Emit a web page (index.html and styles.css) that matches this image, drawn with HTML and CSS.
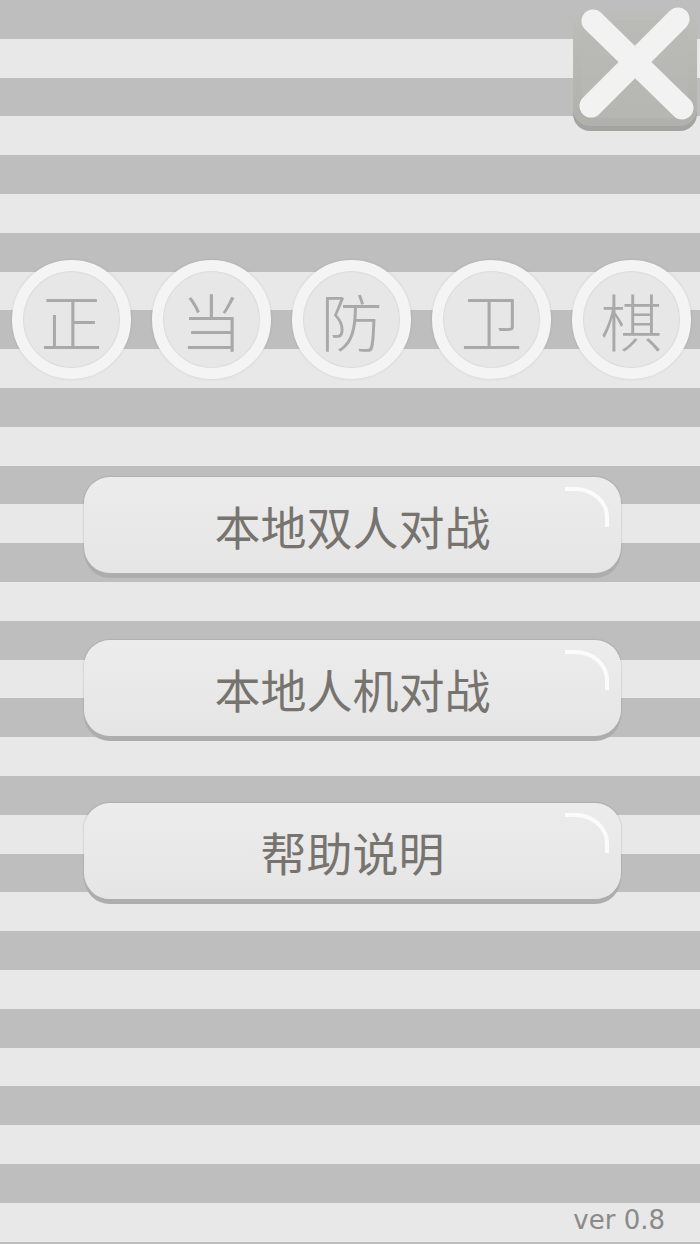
FILE: index.html
```html
<!DOCTYPE html>
<html lang="zh">
<head>
<meta charset="utf-8">
<title>正当防卫棋</title>
<link rel="stylesheet" href="styles.css">
</head>
<body>
<div class="page">
  <header class="topbar">
    <button class="close" aria-label="关闭">
      <svg width="140" height="135" viewBox="0 0 140 135">
        <defs>
          <linearGradient id="boxg" x1="0" y1="0" x2="0" y2="1">
            <stop offset="0" stop-color="#bdbdb9"/>
            <stop offset="1" stop-color="#b0b0ac"/>
          </linearGradient>
        </defs>
        <rect x="13" y="17" width="124" height="114" rx="17" fill="#a3a3a1"/>
        <rect x="13" y="12" width="124" height="114" rx="17" fill="url(#boxg)"/>
        <rect x="22" y="20" width="106" height="98" rx="12" fill="#b9b9b5" opacity="0.6"/>
        <g stroke="#f2f2f2" stroke-width="23" stroke-linecap="round">
          <line x1="33" y1="21" x2="122" y2="108"/>
          <line x1="118" y1="19" x2="31" y2="106"/>
        </g>
      </svg>
    </button>
  </header>

  <h1 class="title">
    <span class="piece">正</span>
    <span class="piece">当</span>
    <span class="piece">防</span>
    <span class="piece">卫</span>
    <span class="piece">棋</span>
  </h1>

  <nav class="menu">
    <button class="menu-btn">本地双人对战</button>
    <button class="menu-btn">本地人机对战</button>
    <button class="menu-btn">帮助说明</button>
  </nav>

  <footer class="version">ver 0.8</footer>
</div>
</body>
</html>
```

FILE: styles.css
```css
* { box-sizing: border-box; }

html, body {
  margin: 0;
  padding: 0;
}

body {
  width: 700px;
  height: 1244px;
  overflow: hidden;
  background: repeating-linear-gradient(
    to bottom,
    #bebebe 0px,
    #bebebe 38.8px,
    #e8e8e8 38.8px,
    #e8e8e8 77.6px
  );
  font-family: "Noto Sans CJK SC", "Noto Sans", sans-serif;
}

.page {
  height: 1244px;
  display: flex;
  flex-direction: column;
}

.topbar {
  display: flex;
  justify-content: flex-end;
  height: 135px;
}

.close {
  border: 0;
  padding: 0;
  margin: 0;
  background: none;
  width: 140px;
  height: 135px;
  display: block;
}

.close svg { display: block; }

.title {
  margin: 125px 0 0 12px;
  display: flex;
  gap: 21px;
  font-weight: 300;
}

.piece {
  width: 119px;
  height: 119px;
  border-radius: 50%;
  background: #e7e7e7;
  border: 11px solid #f4f4f4;
  box-shadow:
    0 0 3px rgba(0, 0, 0, 0.12),
    inset 0 0 2px rgba(0, 0, 0, 0.15);
  display: flex;
  align-items: center;
  justify-content: center;
  font-family: "Noto Sans CJK SC", serif;
  font-size: 62px;
  font-weight: 300;
  line-height: 1;
  color: #a9a9a9;
}

.menu {
  margin-top: 98px;
  display: flex;
  flex-direction: column;
  align-items: flex-start;
  padding-left: 84px;
  gap: 67px;
}

.menu-btn {
  position: relative;
  width: 537px;
  height: 96px;
  border: 0;
  border-radius: 26px;
  background: linear-gradient(to bottom, #ececec 0%, #e8e8e8 60%, #e5e5e5 100%);
  box-shadow:
    0 5px 0 #adadad,
    0 0 2px rgba(0, 0, 0, 0.25);
  font-family: "Noto Sans CJK SC", "Noto Sans", sans-serif;
  font-size: 46px;
  font-weight: 400;
  color: #77736f;
  letter-spacing: 0;
  padding: 0;
  line-height: 96px;
}

.menu-btn::after {
  content: "";
  position: absolute;
  right: 12px;
  top: 10px;
  width: 40px;
  height: 36px;
  border-top: 4px solid #fbfbfb;
  border-right: 4px solid #fbfbfb;
  border-top-right-radius: 34px 30px;
  border-left: 0;
  border-bottom: 0;
}

.version {
  margin-top: auto;
  align-self: flex-end;
  margin-right: 35px;
  margin-bottom: 9px;
  font-family: "DejaVu Sans", sans-serif;
  font-size: 26px;
  color: #8a8a8a;
  line-height: 30px;
}
```
